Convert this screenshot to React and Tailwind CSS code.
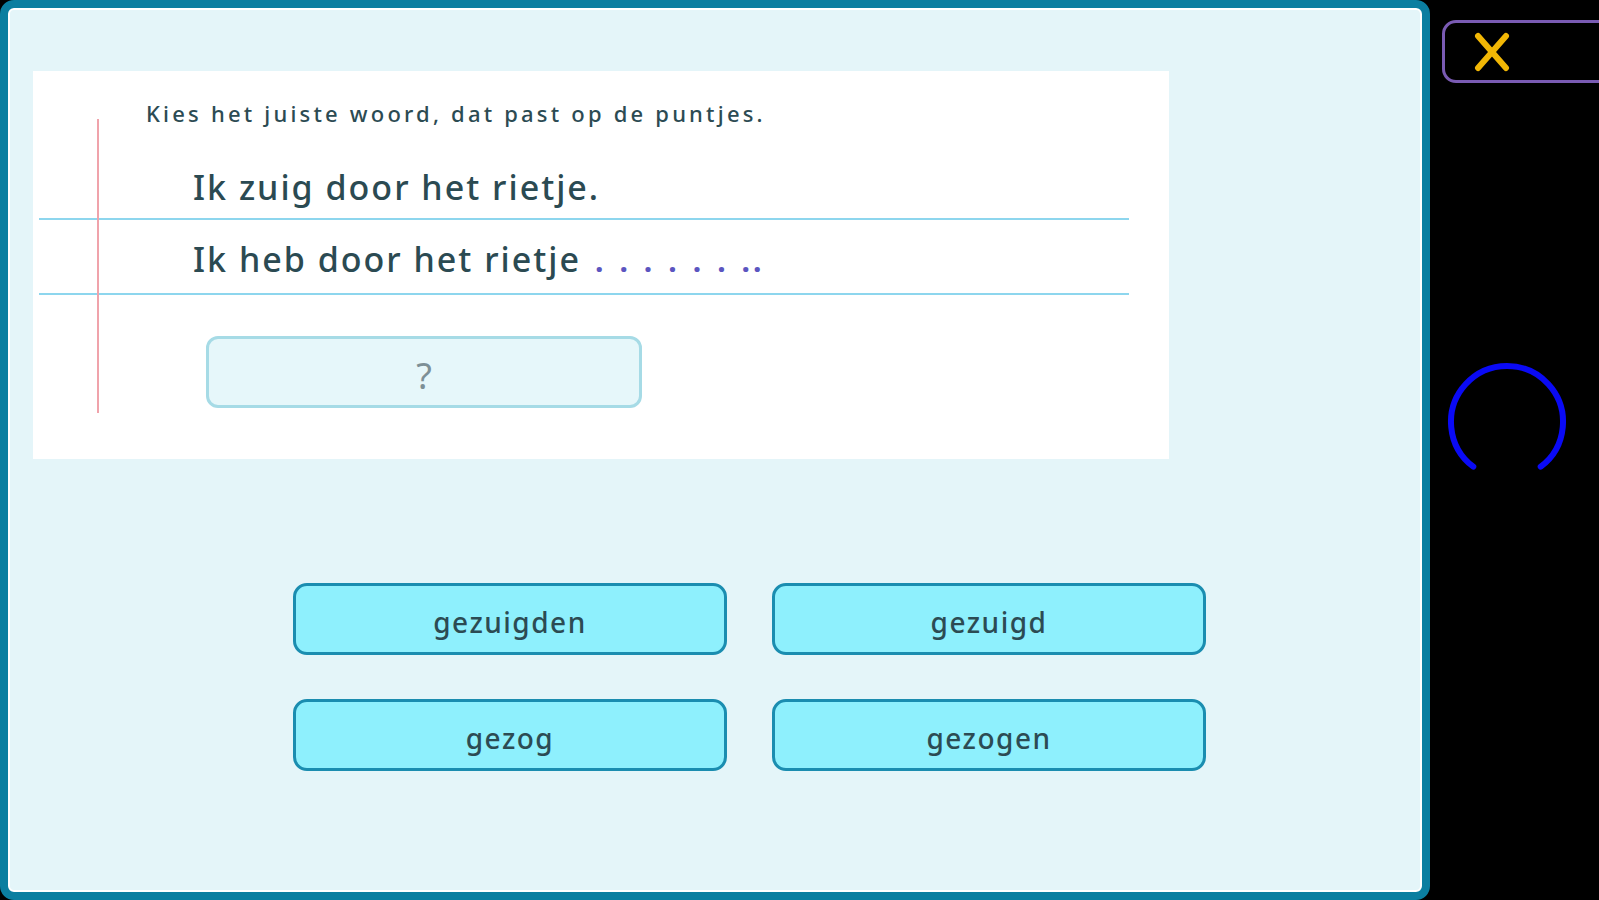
import React from "react";

const font = { fontFamily: '"Noto Sans", "DejaVu Sans", sans-serif' };

function AnswerButton({ label }) {
  return (
    <button
      className="h-[72px] w-[434px] rounded-[14px] border-[3px] border-[#1a8db0] bg-[#8ef0fd] pt-[5px] text-[28px] font-medium tracking-[1.5px] text-[#2c4b53] flex items-center justify-center"
      style={font}
    >
      {label}
    </button>
  );
}

export default function App() {
  return (
    <div className="w-[1599px] h-[900px] bg-black flex overflow-hidden" style={font}>
      {/* main panel */}
      <div className="w-[1430px] h-[900px] shrink-0 rounded-[14px] border-[8px] border-[#0b7ea0] bg-[#e4f5f9] shadow-[inset_0_0_0_2px_#ffffff] flex flex-col">
        {/* white card */}
        <div className="relative ml-[25px] mt-[63px] w-[1136px] h-[388px] bg-white flex flex-col">
          <div className="absolute left-[64px] top-[48px] h-[294px] w-[2px] bg-[#f0a3ab]" />
          <div className="h-[64px] flex items-end pb-[11px] pl-[113px]">
            <span className="text-[22px] leading-none tracking-[3.2px] text-[#2c4b53] font-medium">
              Kies het juiste woord, dat past op de puntjes.
            </span>
          </div>
          <div className="ml-[6px] w-[1090px] h-[85px] border-b-2 border-[#8dd6ee] flex items-end pb-[14px] pl-[154px]">
            <span className="text-[34px] leading-none tracking-[2px] text-[#2b4a52] font-medium">
              Ik zuig door het rietje.
            </span>
          </div>
          <div className="ml-[6px] w-[1090px] h-[75px] border-b-2 border-[#8dd6ee] flex items-end pb-[17px] pl-[154px]">
            <span className="text-[34px] leading-none tracking-[2px] text-[#2b4a52] font-medium">
              Ik heb door het rietje
            </span>
            <span className="ml-[14px] text-[30px] leading-none font-bold text-[#5b55c0] tracking-[16px]">......</span>
            <span className="text-[30px] leading-none font-bold text-[#5b55c0] tracking-[3px]">..</span>
          </div>
          <div className="ml-[173px] mt-[41px] w-[436px] h-[72px] rounded-[12px] border-[3px] border-[#a6dbe6] bg-[#e6f7fa] pt-[8px] flex items-center justify-center">
            <span className="text-[36px] leading-none text-[#7d9096]">?</span>
          </div>
        </div>

        {/* answers */}
        <div className="ml-[285px] mt-[124px] grid grid-cols-[434px_434px] gap-x-[45px] gap-y-[44px]">
          <AnswerButton label="gezuigden" />
          <AnswerButton label="gezuigd" />
          <AnswerButton label="gezog" />
          <AnswerButton label="gezogen" />
        </div>
      </div>

      {/* right side */}
      <div className="flex-1 flex flex-col pl-[12px] pt-[20px]">
        <div className="w-[200px] h-[63px] shrink-0 rounded-[14px] border-[3px] border-[#7a5bb3] flex items-center pl-[29px]">
          <svg width="36" height="40" viewBox="0 0 36 40">
            <line x1="4" y1="4" x2="32" y2="36" stroke="#f2b705" strokeWidth="6" strokeLinecap="round" />
            <line x1="32" y1="4" x2="4" y2="36" stroke="#f2b705" strokeWidth="6" strokeLinecap="round" />
          </svg>
        </div>
        <svg className="mt-[274px]" width="130" height="130" viewBox="0 0 130 130">
          <path
            d="M 31.3 109.7 A 56 56 0 1 1 98.7 109.7"
            fill="none"
            stroke="#0a0af5"
            strokeWidth="6"
            strokeLinecap="round"
          />
        </svg>
      </div>
    </div>
  );
}
